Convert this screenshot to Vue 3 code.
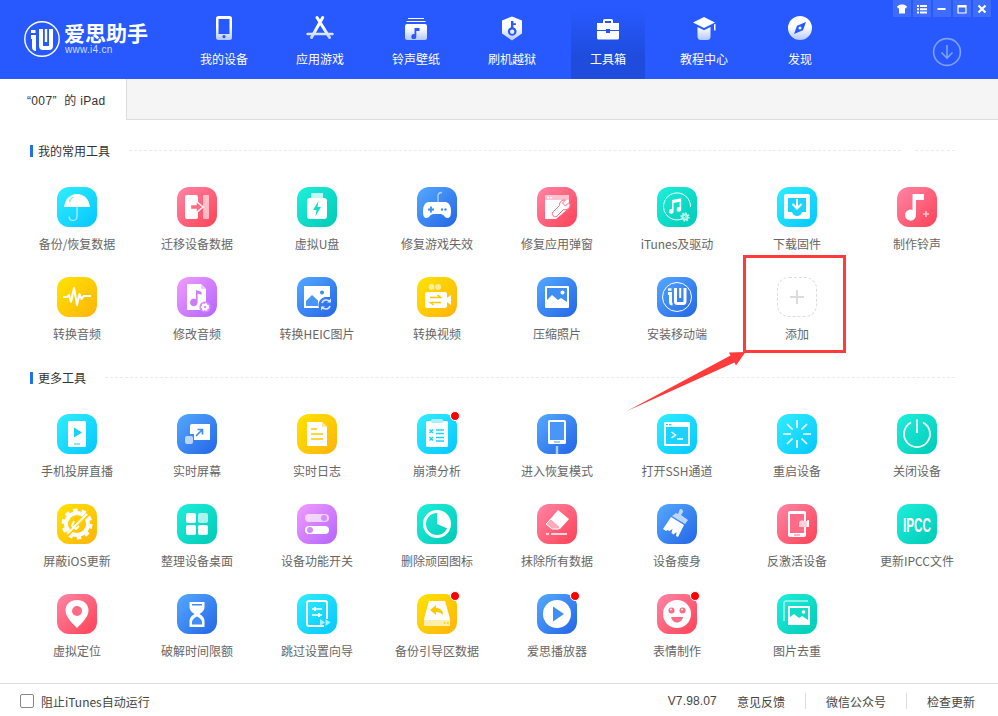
<template>
  <div class="page">
    <svg class="defs" width="0" height="0">
      <defs>
        <linearGradient id="navg" x1="0" y1="0" x2="0" y2="1">
          <stop offset="0" stop-color="#ffffff" />
          <stop offset="0.45" stop-color="#ffffff" />
          <stop offset="1" stop-color="#b4c8ff" />
        </linearGradient>
        <linearGradient id="navs" gradientUnits="userSpaceOnUse" x1="0" y1="0" x2="0" y2="26">
          <stop offset="0" stop-color="#ffffff" />
          <stop offset="0.45" stop-color="#ffffff" />
          <stop offset="1" stop-color="#b4c8ff" />
        </linearGradient>
      </defs>
    </svg>

    <header class="top">
      <div class="logo">
        <svg class="logo-mark" width="38" height="38" viewBox="0 0 38 38">
          <circle cx="19" cy="19" r="17.200" fill="none" stroke="#fff" stroke-width="1.400" />
          <path d="M8 11.500h4.500" stroke="#fff" stroke-width="3" fill="none" />
          <path d="M8 17h3v10q0 2 2 2" stroke="#fff" stroke-width="4" fill="none" />
          <path d="M18 9v17q0 2 2 2h6q2 0 2-2V9" stroke="#fff" stroke-width="4" fill="none" />
          <path d="M23 9v13" stroke="#fff" stroke-width="2.400" fill="none" />
        </svg>
        <div class="logo-text">
          <div class="logo-name">爱思助手</div>
          <div class="logo-url">www.i4.cn</div>
        </div>
      </div>
      <nav class="nav">
        <div v-for="n in navs" :key="n.name" class="nav-item" :class="{ active: n.active }">
          <svg width="32" height="26" viewBox="0 0 32 26" v-html="n.svg"></svg>
          <span>{{ n.name }}</span>
        </div>
      </nav>
      <div class="down">
        <svg width="30" height="30" viewBox="0 0 30 30" fill="none" stroke="#7fa0ff" stroke-width="1.600">
          <circle cx="15" cy="15" r="13.400" />
          <path d="M15 8v13M9.500 15.500 15 21l5.500-5.500" />
        </svg>
      </div>
      <div class="win-btns">
        <div v-for="b in winBtns" :key="b.id" class="win-btn">
          <svg width="12" height="12" viewBox="0 0 12 12" v-html="b.svg"></svg>
        </div>
      </div>
    </header>

    <div class="tabbar">
      <div class="tab">“007”&nbsp; 的 iPad</div>
      <div class="tab-rest"></div>
    </div>

    <main class="main">
      <section v-for="s in sections" :key="s.title" class="section">
        <div class="sec-head">
          <i class="sec-bar"></i>
          <span class="sec-title">{{ s.title }}</span>
          <i class="dash"></i>
          <i v-if="s.tail" class="dash tail"></i>
        </div>
        <div class="grid">
          <div v-for="t in s.tools" :key="t.name" class="tool">
            <div class="tool-icon" :class="t.color">
              <svg width="40" height="40" viewBox="0 0 40 40" v-html="t.svg"></svg>
              <i v-if="t.dot" class="dot"></i>
            </div>
            <span class="tool-name">{{ t.name }}</span>
          </div>
        </div>
      </section>
    </main>

    <footer class="foot">
      <label class="check"><i class="box"></i>阻止iTunes自动运行</label>
      <div class="foot-right">
        <span class="ver">V7.98.07</span>
        <span>意见反馈</span>
        <i class="sep"></i>
        <span>微信公众号</span>
        <i class="sep"></i>
        <span>检查更新</span>
      </div>
    </footer>

    <!-- 截图上的红色标注 -->
    <div class="mark-box"></div>
    <svg class="mark-arrow" width="130" height="70" viewBox="0 0 130 70">
      <path d="M2 65 105.500 9.500 104 6.500 120.500 6 111 19.500 109.500 16.500Z" fill="#ff3b3b" />
    </svg>
  </div>
</template>

<script setup>
const nav = (d) => `<path d="${d}" fill="url(#navg)" fill-rule="evenodd"/>`

const navs = [
  { name: '我的设备', svg: nav('M10.500 1h11a2.500 2.500 0 0 1 2.500 2.500v19a2.500 2.500 0 0 1-2.500 2.500h-11A2.500 2.500 0 0 1 8 22.500v-19A2.500 2.500 0 0 1 10.500 1ZM10.500 4v15h11V4ZM16 20a1.600 1.600 0 1 0 0 3.200 1.600 1.600 0 0 0 0-3.200Z') },
  { name: '应用游戏', svg: '<path d="M18.700 2.500 7.500 22.500M13 2.500 25.500 22.500" fill="none" stroke="url(#navs)" stroke-width="3" stroke-linecap="round"/><path d="M3.500 19h25" fill="none" stroke="url(#navs)" stroke-width="2.400" stroke-linecap="round"/>' },
  { name: '铃声壁纸', svg: nav('M8 3h16v1H8ZM6.500 6h19v1h-19ZM7 9h18a2 2 0 0 1 2 2v12a2 2 0 0 1-2 2H7a2 2 0 0 1-2-2V11a2 2 0 0 1 2-2ZM14.500 13v6.200a2.500 2.500 0 1 0 1.800 2.300V16h3.200v-3Z') },
  { name: '刷机越狱', svg: nav('M16 1.500 26 5.500v13L16 25.500 6 18.500v-13ZM15 6v6.300a4.300 4.300 0 1 0 2.400 0V10h2.500V8.300h-2.500V6ZM16.200 14.500a2.200 2.200 0 1 1 0 4.400 2.200 2.200 0 0 1 0-4.400Z') },
  { name: '工具箱', active: true, svg: '<path d="M11 8V5.500A1.500 1.500 0 0 1 12.500 4h7A1.500 1.500 0 0 1 21 5.500V8h-2V6h-6v2Z" fill="#fff"/><path d="M5 8h22v7H18v-1h-4v1H5Z" fill="#fff"/><path d="M5 16h9v2h4v-2h9v7a1.500 1.500 0 0 1-1.500 1.500h-19A1.500 1.500 0 0 1 5 23Z" fill="#fff"/>' },
  { name: '教程中心', svg: nav('M16 2 27 7.500 16 13 5 7.500ZM9.500 12 16 15.200 22.500 12v9.500a3.500 3.500 0 0 1-3.500 3.500h-6a3.500 3.500 0 0 1-3.500-3.500ZM26 9.500l1.500-.8v6.800H26Z') },
  { name: '发现', svg: nav('M16 1a12 12 0 1 1 0 24 12 12 0 0 1 0-24ZM22 7l-9 3.800L10 19l9-3.800ZM16 11.500a1.500 1.500 0 1 1 0 3 1.500 1.500 0 0 1 0-3Z') },
]

const winBtns = [
  { id: 'skin', svg: '<path d="M3 2 5 1.500h2L9 2l2 1.500-1 2-1-.5v5.500H3V5L2 5.500l-1-2Z" fill="#fff"/>' },
  { id: 'menu', svg: '<path d="M1 2h2v2H1ZM4 2h7v2H4ZM1 5.200h2v2H1ZM4 5.200h7v2H4ZM1 8.400h2v2H1ZM4 8.400h7v2H4Z" fill="#fff"/>' },
  { id: 'min', svg: '<path d="M1.500 5h8v2h-8Z" fill="#fff"/>' },
  { id: 'max', svg: '<path d="M2 2.500h8v7.500H2Z" fill="none" stroke="#fff" stroke-width="1.200"/><path d="M2 2h8v2.500H2Z" fill="#fff"/>' },
  { id: 'close', svg: '<path d="M2.500 2.500l7 7M9.500 2.500l-7 7" stroke="#fff" stroke-width="2.200"/>' },
]

const T = (name, color, svg, dot) => ({ name, color, svg, dot })
const gear = (x, y, r, c) => `<circle cx="${x}" cy="${y}" r="${r}" fill="none" stroke="${c}" stroke-width="2"/><circle cx="${x}" cy="${y}" r="${r + 1.200}" fill="none" stroke="${c}" stroke-width="1.400" stroke-dasharray="1.600 1.550"/>`

const mine = [
  T('备份/恢复数据', 'cyan', '<path d="M7 20C8 12 13 7 20 7s12 5 13 13Z" fill="#fff"/><path d="M20 20v9.500a4 4 0 0 1-8 0" fill="none" stroke="#fff" stroke-opacity=".65" stroke-width="1.300"/><path d="M12.500 15c.6-2.400 2-4 4-5" fill="none" stroke="#7ce9ff" stroke-width="1.300"/>'),
  T('迁移设备数据', 'pink', '<rect x="8" y="8" width="13" height="24" rx="2" fill="#fff"/><rect x="26" y="8" width="6" height="24" rx="1" fill="#fff" fill-opacity=".6"/><path d="M13.500 17.500H19V14l7 6-7 6v-3.500h-5.500Z" fill="#ff6a84" stroke="#fff" stroke-width="1.300"/>'),
  T('虚拟U盘', 'green', '<path d="M14 6h12v6H14Z" fill="#fff" fill-opacity=".75"/><rect x="10" y="11" width="20" height="21" rx="3" fill="#fff"/><path d="M21.500 14 16 23h3.500l-1 6 5.500-9h-3.500Z" fill="#12dcc6"/>'),
  T('修复游戏失效', 'blue', '<path d="M21 15v-6q0-3.500 4-3.500" fill="none" stroke="#fff" stroke-opacity=".6" stroke-width="1.300"/><path d="M12 15h16c4 0 6 4 6 9s-1 7-3.500 7c-3 0-3.500-4-7-4h-7c-3.500 0-4 4-7 4C7 31 6 29 6 24s2-9 6-9Z" fill="#fff"/><path d="M11 22.500h6M14 19.500v6" stroke="#3d8df5" stroke-width="1.800"/><circle cx="25" cy="22.500" r="1.200" fill="#3d8df5"/><circle cx="28.500" cy="22.500" r="1.200" fill="#3d8df5"/>'),
  T('修复应用弹窗', 'pink', '<path d="M8 8h24v13L19 32H8Z" fill="#fff"/><path d="M8 8h24v5H8Z" fill="#ffc2d0"/><path d="M10 10h2v1.500h-2ZM13 10h2v1.500h-2Z" fill="#fff"/><path d="M33 17a5 5 0 0 1-6.500 5.500L21 28a3 3 0 1 1-4-4l5.500-5.500A5 5 0 0 1 28.500 13l-3 3 3 3 3-3Z" fill="#fff" stroke="#ff6a84" stroke-width="1"/>'),
  T('iTunes及驱动', 'green', '<path d="M30 28.500A13.500 13.500 0 1 1 33.500 20" fill="none" stroke="#fff" stroke-width="1"/><path d="M16 14v9.300a2.300 2.300 0 1 0 1.600 2V17l6-1.300v5.600a2.300 2.300 0 1 0 1.600 2V12.300Z" transform="translate(-1 -1)" fill="#fff"/><circle cx="28" cy="30" r="2.500" fill="none" stroke="#b5f5ec" stroke-width="2"/><circle cx="28" cy="30" r="4" fill="none" stroke="#b5f5ec" stroke-width="1.500" stroke-dasharray="1.600 1.500"/>'),
  T('下载固件', 'cyan', '<path d="M9 7h22a2 2 0 0 1 2 2v21a2 2 0 0 1-2 2H9a2 2 0 0 1-2-2V9a2 2 0 0 1 2-2Z" fill="#fff"/><path d="M11 11h18v14h-4c-1 3-3 4-5 4s-4-1-5-4h-4Z" fill="#1cd3ff"/><path d="M20 12v9M15.500 17l4.500 4.500 4.500-4.500" fill="none" stroke="#fff" stroke-width="2"/>'),
  T('制作铃声', 'pink', '<path d="M15.500 7H27v6h-8v15a5.500 5.500 0 1 1-3.500-5Z" fill="#fff"/><path d="M26 27h6M29 24v6" stroke="#fff" stroke-opacity=".65" stroke-width="1.600"/>'),
  T('转换音频', 'yellow', '<path d="M6 20h4l2-2 2 7 3-14 3 17 2.500-11 2 5 2-3H34" fill="none" stroke="#fff" stroke-width="2" stroke-linejoin="round"/>'),
  T('修改音频', 'purple', '<path d="M10 7h14l5 5v21H10Z" fill="#fff"/><path d="M24 7l5 5h-5Z" fill="#f4c8ff"/><path d="M19 13v9.300a3.800 3.800 0 1 0 1.600 3V16.500l4 1.200v-2.700Z" fill="#cd7cf7"/><circle cx="28" cy="30" r="5.600" fill="#d48bff"/>' + gear(28, 30, 2.200, '#fff')),
  T('转换HEIC图片', 'blue', '<path d="M7 9h26v11h-4a8 8 0 0 0-7 11H7Z" fill="#fff"/><circle cx="25" cy="15.500" r="2" fill="#3d8df5"/><path d="M9 29V24l6-6 6 5.500V29Z" fill="#4a95f8"/><path d="M25 26a4.500 4.500 0 0 1 8-1M33 29a4.500 4.500 0 0 1-8 1" fill="none" stroke="#d6e6ff" stroke-width="1.600"/><path d="M34 21.500v4h-4ZM24 33.500v-4h4Z" fill="#d6e6ff"/>'),
  T('转换视频', 'yellow', '<circle cx="14.500" cy="10" r="3" fill="#fff" fill-opacity=".6"/><circle cx="21" cy="10" r="3" fill="#fff" fill-opacity=".6"/><rect x="8" y="15" width="22" height="16" rx="2" fill="#fff"/><path d="M30 21l4-3v10l-4-3Z" fill="#fff"/><path d="M13 20.500h10.500l-3-2.500M24 25.500H13.500l3 2.500" fill="none" stroke="#ffc800" stroke-width="1.600"/>'),
  T('压缩照片', 'blue', '<rect x="8" y="9" width="24" height="22" rx="1" fill="#fff"/><path d="M10 11h20v14l-6-4-3 2-6-5-5 5Z" fill="#3f8ef6"/><circle cx="25.500" cy="15.500" r="2" fill="#fff"/>'),
  T('安装移动端', 'blue', '<circle cx="20" cy="20" r="14.500" fill="none" stroke="#fff" stroke-width="1"/><path d="M11 12.500h3.500" fill="none" stroke="#fff" stroke-width="2.400"/><path d="M11 16.500h2.500V25q0 2 2 2" fill="none" stroke="#fff" stroke-width="3"/><path d="M18.500 11v13.500q0 2 2 2H26q2 0 2-2V11" fill="none" stroke="#fff" stroke-width="3"/><path d="M23.200 11v10" fill="none" stroke="#fff" stroke-width="2"/>'),
  { name: '添加', color: 'add', svg: '<path d="M13 20h14M20 13v14" stroke="#dcdcdc" stroke-width="2"/>' },
]

const more = [
  T('手机投屏直播', 'cyan', '<rect x="11" y="7" width="18" height="26" rx="1.500" fill="#fff"/><path d="M17 13.500v10l8-5Z" fill="#16d2ff"/><path d="M17 30h6" stroke="#16d2ff" stroke-width="1"/>'),
  T('实时屏幕', 'blue', '<path d="M15 10h18v16H17v-6h-4v-8a2 2 0 0 1 2-2Z" fill="#fff"/><rect x="8" y="22" width="8" height="8" rx="2" fill="#fff" fill-opacity=".65"/><path d="M19 22l6-6M20.500 15.500h5v5" fill="none" stroke="#3d8df5" stroke-width="1.700"/>'),
  T('实时日志', 'yellow', '<path d="M10 8h15l5 5v19H10Z" fill="#fff"/><path d="M25 8l5 5h-5Z" fill="#ffe9a0"/><path d="M14 15h6M14 20h12M14 25h12" stroke="#ffc800" stroke-width="1.600"/>'),
  T('崩溃分析', 'cyan', '<rect x="9" y="7" width="22" height="26" rx="1.500" fill="#fff"/><rect x="14" y="5" width="12" height="4" rx="1.500" fill="#a9efff"/><path d="M12.500 15.500l3.500 3.500M16 15.500 12.500 19M12.500 23l3.500 3.500M16 23l-3.500 3.500" stroke="#1cd3ff" stroke-width="1.500"/><path d="M19 16h8M19 19.500h8M19 23.500h8M19 27h8" stroke="#1cd3ff" stroke-width="1.400"/>', true),
  T('进入恢复模式', 'blue', '<rect x="11" y="6" width="18" height="24" rx="1.500" fill="#fff"/><rect x="13" y="8" width="14" height="18" fill="#4896f8"/><path d="M17 28h6" stroke="#4896f8" stroke-width="1"/><path d="M20 32v8" stroke="#a9cfff" stroke-width="2.400"/>'),
  T('打开SSH通道', 'cyan', '<rect x="7" y="8" width="26" height="24" rx="1" fill="#fff"/><rect x="9" y="13" width="22" height="17" fill="#1cd3ff"/><path d="M9 10h2v1.300H9ZM12 10h2.500v1.300H12Z" fill="#1cd3ff"/><path d="M14.500 18l4 3-4 3M20 25h6" fill="none" stroke="#fff" stroke-width="1.500"/>'),
  T('重启设备', 'cyan', '<path d="M20 6v8M20 26v8M6 20h8M26 20h8M10 10l5.500 5.500M30 10l-5.500 5.500M10 30l5.500-5.500M30 30l-5.500-5.500" stroke="#fff" stroke-width="1.600"/>'),
  T('关闭设备', 'green', '<path d="M14 8.500a13 13 0 1 0 12 0M20 5.500V19" fill="none" stroke="#fff" stroke-width="1.800"/>'),
  T('屏蔽iOS更新', 'yellow', '<circle cx="20" cy="20" r="11" fill="none" stroke="#fff" stroke-width="4"/><circle cx="20" cy="20" r="14" fill="none" stroke="#fff" stroke-width="3" stroke-dasharray="4.500 4.300"/><path d="M9 32 32 9" stroke="#ffcf00" stroke-width="4"/><path d="M10 30 30 10" stroke="#fff" stroke-width="1.800"/><path d="M17 17l-2 5 4 3 3-3" fill="none" stroke="#fff" stroke-width="2"/>'),
  T('整理设备桌面', 'green', '<rect x="9" y="9" width="10" height="10" rx="2" fill="#fff"/><rect x="21" y="9" width="10" height="10" rx="2" fill="#fff" fill-opacity=".65"/><rect x="9" y="21" width="10" height="10" rx="2" fill="#fff"/><rect x="21" y="21" width="10" height="10" rx="2" fill="#fff"/>'),
  T('设备功能开关', 'purple', '<rect x="8" y="10" width="24" height="8" rx="4" fill="#fff" fill-opacity=".65"/><circle cx="27" cy="14" r="3" fill="#d48bff"/><rect x="8" y="22" width="24" height="8" rx="4" fill="#fff"/><circle cx="13" cy="26" r="3" fill="#d48bff"/>'),
  T('删除顽固图标', 'green', '<circle cx="20" cy="20" r="12.500" fill="none" stroke="#fff" stroke-width="3"/><path d="M20 7.500V20l11.500 5A12.500 12.500 0 0 0 20 7.500Z" fill="#fff"/>'),
  T('抹除所有数据', 'pink', '<path d="M21 6l11 9-9 10H15l-6-5Z" fill="#fff"/><path d="M14 15l9 8-1 2h-7l-6-5Z" fill="#ffa9bb" stroke="#fff" stroke-width="1"/><path d="M14 30h16M9 30h3" stroke="#fff" stroke-width="1.300"/>'),
  T('设备瘦身', 'blue', '<path d="M23 5a2.500 2.500 0 0 1 3 3l-2 3 7 5-3 4-13-8 4-3 2 1Z" fill="#bcd8ff"/><path d="M14 13l13 8-6 12-2-1 .5-4-3 2.500-2-1.500 1-4-3 2-2-1-1.500 1L6 25Z" fill="#fff"/>'),
  T('反激活设备', 'pink', '<rect x="11" y="7" width="18" height="26" rx="2" fill="#fff"/><rect x="13" y="10" width="14" height="19" fill="#ff6a84"/><path d="M22 19a3 3 0 0 1 5-2h3v6h-8Z" fill="#ffd0da"/><path d="M17 31h6" stroke="#ff6a84" stroke-width="1"/><path d="M30 16h2v7h-2Z" fill="#fff"/>'),
  T('更新IPCC文件', 'green', '<text transform="translate(20 27.500) scale(.56 1)" text-anchor="middle" font-family="Liberation Sans, sans-serif" font-size="21" font-weight="700" fill="#fff">IPCC</text>'),
  T('虚拟定位', 'pink', '<path d="M20 6c7 0 11.500 4.500 11.500 10.500C31.500 23 24 30 20 34 16 30 8.500 23 8.500 16.500 8.500 10.500 13 6 20 6Z" fill="#fff"/><circle cx="20" cy="17" r="5" fill="#ff6a84"/>'),
  T('破解时间限额', 'blue', '<path d="M12.500 8h15v5q0 4-5 7 5 3 5 7v6h-15v-6q0-4 5-7-5-3-5-7Z" fill="#fff"/><path d="M15 10h10v1.500H15ZM20 22.500q-5 2.500-5 5.500v2.500h10V28q0-3-5-5.500Z" fill="#3f8ef6"/>'),
  T('跳过设置向导', 'cyan', '<path d="M27 32H12a2 2 0 0 1-2-2V9a2 2 0 0 1 2-2h16a2 2 0 0 1 2 2v16" fill="none" stroke="#fff" stroke-width="2"/><path d="M15 15h10M15 21h10" stroke="#fff" stroke-width="1.500"/><path d="M18 13v4M22 19v4" stroke="#fff" stroke-width="2"/><path d="M23 25l5 3.500-5 3.500ZM28.500 25l5 3.500-5 3.500Z" fill="#a9efff"/>'),
  T('备份引导区数据', 'yellow', '<path d="M12 7h16l5 18v6a1 1 0 0 1-1 1H8a1 1 0 0 1-1-1v-6Z" fill="#fff"/><path d="M7 26h26v5a1 1 0 0 1-1 1H8a1 1 0 0 1-1-1Z" fill="#ffefad"/><path d="M26 21c0-5-3-7-7-7v-3l-6 5 6 5v-3c3 0 5 1 7 3Z" fill="#ffc800"/><path d="M27 29h1.500M30 29h1.500" stroke="#ffc800" stroke-width="1.400"/>', true),
  T('爱思播放器', 'blue', '<circle cx="20" cy="20" r="14" fill="#fff"/><path d="M16 12.500v15l11-7.500Z" fill="#3f8ef6"/>', true),
  T('表情制作', 'pink', '<circle cx="20" cy="20" r="14" fill="#fff"/><circle cx="14.500" cy="16.500" r="3" fill="#ff6a84"/><circle cx="25.500" cy="16.500" r="3" fill="#ff6a84"/><circle cx="14" cy="15.500" r="1" fill="#fff"/><circle cx="25" cy="15.500" r="1" fill="#fff"/><path d="M14 23h12c-1 4-3.500 5.500-6 5.500S15 27 14 23Z" fill="#ff6a84"/>', true),
  T('图片去重', 'green', '<path d="M7 27V9a2 2 0 0 1 2-2h22" fill="none" stroke="#fff" stroke-opacity=".65" stroke-width="1.500"/><rect x="11" y="12" width="22" height="19" fill="#fff"/><path d="M13 14h18v12l-6-4-3 2-5-4-4 3Z" fill="#12dcc6"/><circle cx="26.500" cy="18" r="1.800" fill="#fff"/>'),
]

const sections = [
  { title: '我的常用工具', tail: true, tools: mine },
  { title: '更多工具', tools: more },
]
</script>

<style>
html, body { margin: 0; background: #fff; }
</style>

<style scoped>
.page {
  position: relative;
  width: 998px;
  height: 716px;
  display: flex;
  flex-direction: column;
  overflow: hidden;
  background: #fff;
  font-family: "Noto Sans CJK SC", "Liberation Sans", sans-serif;
  font-size: 12px;
  color: #666;
}
.defs { position: absolute; }

.top {
  position: relative;
  display: flex;
  height: 79px;
  flex: none;
  background: #2759ff;
  color: #fff;
}
.logo {
  width: 176px;
  flex: none;
  display: flex;
  align-items: flex-start;
  padding: 20px 0 0 23px;
  box-sizing: border-box;
}
.logo-mark { flex: none; }
.logo-text { margin-left: 3px; }
.logo-name {
  font-size: 21px;
  line-height: 24px;
  font-weight: 700;
  white-space: nowrap;
}
.logo-url {
  font-family: "Liberation Sans", sans-serif;
  font-size: 10px;
  line-height: 12px;
  margin-left: 1px;
  letter-spacing: .3px;
  color: #cfdcff;
}
.nav { display: flex; }
.nav-item {
  position: relative;
  width: 96px;
  padding-top: 15px;
  box-sizing: border-box;
  display: flex;
  flex-direction: column;
  align-items: center;
}
.nav-item span { margin-top: 9px; line-height: 18px; position: relative; }
.nav-item svg { position: relative; }
.nav-item.active::before {
  content: "";
  position: absolute;
  left: 11px;
  right: 11px;
  top: 8px;
  bottom: 0;
  background: linear-gradient(#2759ff, #1f4cdc 70%);
}
.down { margin-left: 84px; padding-top: 37px; }
.win-btns {
  position: absolute;
  top: 0;
  right: 7px;
  display: flex;
  gap: 2px;
}
.win-btn {
  width: 18px;
  height: 17px;
  display: flex;
  align-items: center;
  justify-content: center;
  background: #3d6cff;
}

.tabbar { display: flex; height: 41px; flex: none; }
.tab {
  width: 126px;
  box-sizing: border-box;
  padding: 0 0 1px 27px;
  line-height: 44px;
  letter-spacing: .35px;
  font-family: "Liberation Sans", "Noto Sans CJK SC", sans-serif;
  color: #333;
  background: #fff;
}
.tab-rest {
  flex: 1;
  background: #f5f5f5;
  border-left: 1px solid #dcdcdc;
  border-bottom: 1px solid #dcdcdc;
}

.main { flex: 1; padding-top: 21px; }
.sec-head {
  display: flex;
  align-items: center;
  height: 20px;
  padding: 0 43px 0 30px;
}
.section + .section { margin-top: 11px; }
.sec-bar { width: 3px; height: 12px; background: #1f6fee; margin-right: 5px; }
.sec-title { color: #333; line-height: 20px; margin-right: 19px; }
.dash { flex: 1; border-top: 1px dashed #ebebeb; margin-top: -1px; }
.dash.tail { flex: none; width: 40px; margin-left: 14px; }
.grid {
  display: grid;
  grid-template-columns: repeat(8, 120px);
  grid-auto-rows: 90px;
  margin-left: 17px;
  margin-top: 16px;
}
.tool {
  display: flex;
  flex-direction: column;
  align-items: center;
  padding-top: 10px;
  box-sizing: border-box;
}
.tool-icon {
  position: relative;
  width: 40px;
  height: 40px;
  border-radius: 12px;
  box-sizing: border-box;
}
.tool-icon svg { display: block; }
.tool-name { margin-top: 8px; line-height: 18px; white-space: nowrap; }
.cyan { background: linear-gradient(135deg, #32eeff, #04c6ff); }
.blue { background: linear-gradient(135deg, #55a9ff, #2365e6); }
.pink { background: linear-gradient(135deg, #ff86a6, #ff4155); }
.green { background: linear-gradient(135deg, #1fefdc, #00cab6); }
.yellow { background: linear-gradient(135deg, #ffe400, #ffb30c); }
.purple { background: linear-gradient(135deg, #f29bff, #b364ff); }
.add { border: 1px dashed #dcdcdc; }
.add svg { margin: -1px; }
.dot {
  position: absolute;
  right: -3px;
  top: -3px;
  width: 8px;
  height: 8px;
  border-radius: 50%;
  background: #ff0000;
  border: 1px solid #fff;
}

.foot {
  flex: none;
  height: 33px;
  border-top: 1px solid #dcdcdc;
  box-sizing: border-box;
  display: flex;
  align-items: center;
  padding: 2px 23px 0 20px;
  color: #444;
}
.check { display: flex; align-items: center; }
.box {
  width: 14px;
  height: 14px;
  box-sizing: border-box;
  border: 1px solid #888;
  border-radius: 2px;
  margin-right: 7px;
}
.foot-right { margin-left: auto; display: flex; align-items: center; }
.ver { margin-right: 20px; font-family: "Liberation Sans", sans-serif; font-size: 12px; letter-spacing: .15px; }
.sep { width: 1px; height: 16px; background: #dcdcdc; margin: 0 20px; }

.mark-box {
  position: absolute;
  left: 743px;
  top: 255px;
  width: 103px;
  height: 98px;
  box-sizing: border-box;
  border: 3px solid #ff3b3b;
}
.mark-arrow { position: absolute; left: 625px; top: 346px; }
</style>
